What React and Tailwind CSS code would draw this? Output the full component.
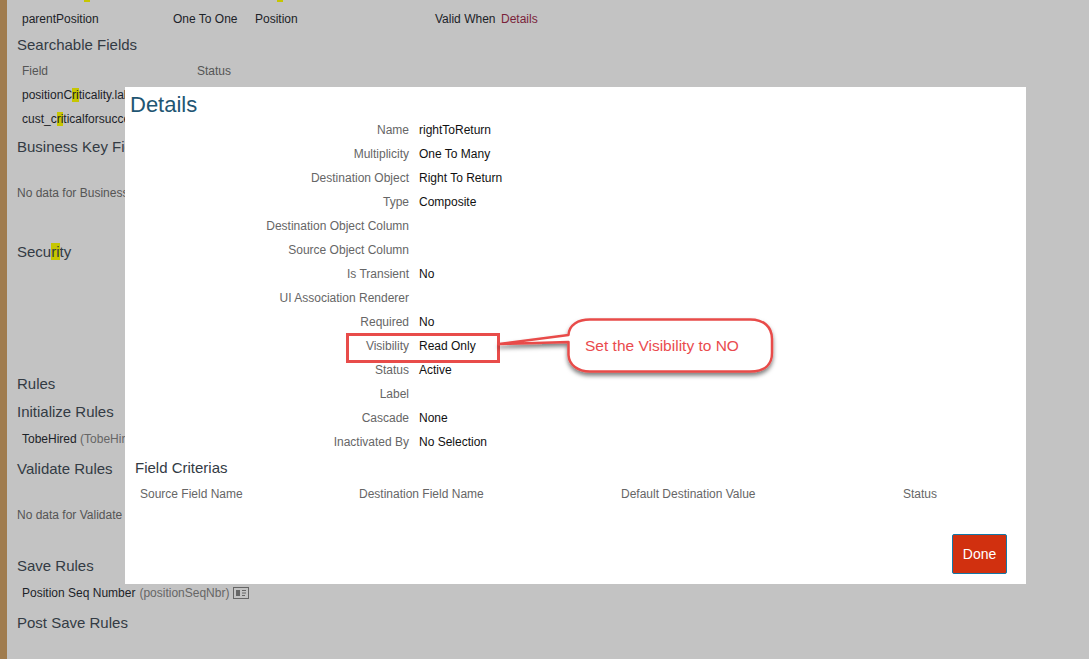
import React from 'react'

const Hit = ({ children }) => <span className="bg-[#c6c600]">{children}</span>

const Heading = ({ className = '', children }) => (
  <h3 className={`h-6 pl-[17px] text-[15px] leading-6 text-[#333b44] whitespace-nowrap ${className}`}>{children}</h3>
)

const Row = ({ className = 'pl-[22px]', children }) => (
  <div className={`h-6 text-xs leading-6 text-[#1c2228] whitespace-nowrap ${className}`}>{children}</div>
)

const details = [
  ['Name', 'rightToReturn'],
  ['Multiplicity', 'One To Many'],
  ['Destination Object', 'Right To Return'],
  ['Type', 'Composite'],
  ['Destination Object Column', ''],
  ['Source Object Column', ''],
  ['Is Transient', 'No'],
  ['UI Association Renderer', ''],
  ['Required', 'No'],
  ['Visibility', 'Read Only'],
  ['Status', 'Active'],
  ['Label', ''],
  ['Cascade', 'None'],
  ['Inactivated By', 'No Selection'],
]

const Callout = () => (
  <svg className="absolute left-[340px] top-[310px] pointer-events-none" width="445" height="80" viewBox="340 310 445 80">
    <defs>
      <filter id="sh" x="-10%" y="-20%" width="120%" height="150%">
        <feDropShadow dx="0" dy="3" stdDeviation="2" floodColor="#000" floodOpacity="0.5" />
      </filter>
    </defs>
    <rect x="347.500" y="334.500" width="151" height="27" fill="none" stroke="#e84c4a" strokeWidth="3" />
    <path
      d="M499 344 L568.500 335 C569 325 578 319.500 590 319.500 L750 319.500 C764 319.500 772 327 772 339 L772 353 C772 365 764 371.500 750 371.500 L590 371.500 C578 371.500 569 365 568.500 355 L568.500 342 Z"
      fill="#fff"
      stroke="#e84c4a"
      strokeWidth="2.500"
      strokeLinejoin="round"
      filter="url(#sh)"
    />
  </svg>
)

export default function App() {
  return (
    <div className="relative h-[659px] w-[1089px] overflow-hidden bg-[#c3c3c3] font-['Liberation_Sans',Arial,sans-serif]">
      <div className="flex h-full">
        <div className="w-[7px] shrink-0 bg-[#a07c4e]" />
        <div className="-ml-[7px] flex flex-1 flex-col">
          {/* bottom edge of the row scrolled off the top */}
          <div className="flex h-[2px]">
            <div className="ml-[84px] w-[6px] bg-[#c6c600]" />
            <div className="ml-[187px] w-[6px] bg-[#c6c600]" />
          </div>
          <Row className="mt-[5px] grid grid-cols-[151px_82px_180px_66px_auto] pl-[22px]">
            <span>parentPosition</span>
            <span>One To One</span>
            <span>Position</span>
            <span>Valid When</span>
            <span className="text-[#7a1f3a]">Details</span>
          </Row>
          <Heading className="mt-0.5">Searchable Fields</Heading>
          <Row className="mt-0.5 grid grid-cols-[175px_auto] pl-[22px] text-[#555]">
            <span>Field</span>
            <span>Status</span>
          </Row>
          <Row className="w-[125px] overflow-hidden pl-[22px]">position<span>C</span><Hit>ri</Hit>ticality.label</Row>
          <Row className="w-[125px] overflow-hidden pl-[22px]">cust_c<Hit>ri</Hit>ticalforsuccess</Row>
          <Heading className="mt-1 w-[125px] overflow-hidden">Business Key Fields</Heading>
          <Row className="mt-[22px] w-[125px] overflow-hidden pl-[17px] text-[#555]">No data for Business Key Fields</Row>
          <Heading className="mt-[35px]">Secu<Hit>ri</Hit>ty</Heading>
          <Heading className="mt-[108px]">Rules</Heading>
          <Heading className="mt-1">Initialize Rules</Heading>
          <Row className="mt-[3px] w-[125px] overflow-hidden pl-[22px]">TobeHired <span className="text-[#666]">(TobeHired)</span></Row>
          <Heading className="mt-1.5">Validate Rules</Heading>
          <Row className="mt-[22px] w-[125px] overflow-hidden pl-[17px] text-[#555]">No data for Validate Rules</Row>
          <Heading className="mt-[27px]">Save Rules</Heading>
          <Row className="mt-[3px] flex items-center gap-1 pl-[22px]">
            <span>Position Seq Number</span>
            <span className="text-[#666]">(positionSeqNbr)</span>
            <svg width="16" height="12" viewBox="0 0 16 12" fill="none">
              <rect x="0.500" y="0.500" width="15" height="11" stroke="#666" />
              <rect x="3" y="3" width="4" height="6" fill="#666" />
              <path d="M9 3.500h4M9 6h4M9 8.500h3" stroke="#666" />
            </svg>
          </Row>
          <Heading className="mt-1.5">Post Save Rules</Heading>
        </div>
      </div>

      {/* Details dialog */}
      <div className="absolute left-[125px] top-[87px] flex h-[497px] w-[901px] flex-col bg-white">
        <h2 className="h-[31px] pl-[5px] text-[22px] leading-[36px] text-[#1f5673]">Details</h2>
        <div className="flex flex-col">
          {details.map(([label, value]) => (
            <div key={label} className="grid h-6 grid-cols-[284px_auto] gap-x-[10px] text-xs leading-6">
              <span className="text-right text-[#666]">{label}</span>
              <span className="text-[#111]">{value}</span>
            </div>
          ))}
        </div>
        <h3 className="mt-[2px] h-6 pl-[10px] text-[15px] leading-6 text-[#333b44]">Field Criterias</h3>
        <div className="mt-0.5 grid h-6 grid-cols-[219px_262px_282px_auto] pl-[15px] text-xs leading-6 text-[#666]">
          <span>Source Field Name</span>
          <span>Destination Field Name</span>
          <span>Default Destination Value</span>
          <span>Status</span>
        </div>
        <div className="mt-auto flex justify-end pb-[10px] pr-[19px]">
          <button className="h-10 w-[55px] rounded-[2px] border border-[#1278a8] bg-[#d1300f] text-sm text-white">Done</button>
        </div>
      </div>

      <Callout />
      <span className="absolute left-[585px] top-[336px] text-[15.5px] leading-[20px] text-[#ea4b4e] whitespace-nowrap">Set the Visibility to NO</span>
    </div>
  )
}
